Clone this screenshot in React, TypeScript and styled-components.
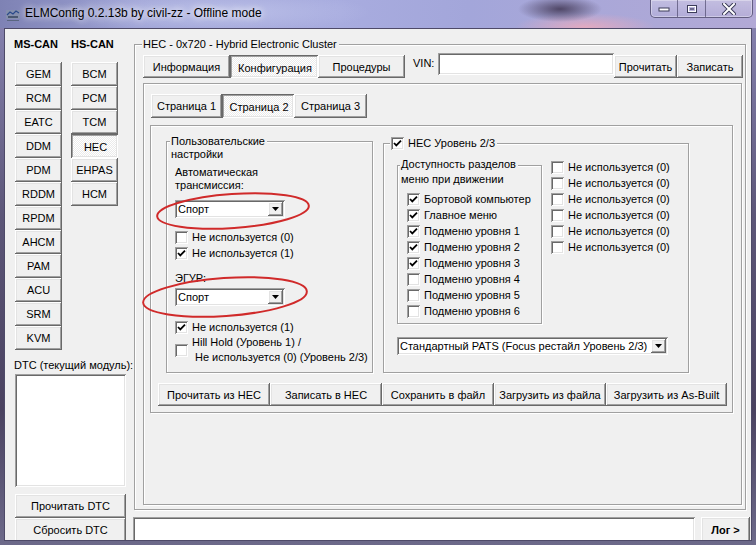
import React from "react";
import styled, { createGlobalStyle, css } from "styled-components";

const GlobalStyle = createGlobalStyle`
  *, *::before, *::after { box-sizing: border-box; }
  html, body { margin: 0; padding: 0; background: #3a3550; }
  body {
    font-family: "Liberation Sans", Arial, sans-serif;
    font-size: 11px;
    color: #000;
  }
`;

const raised = css`
  background: #f0f0f0;
  box-shadow: inset -1px -1px #696969, inset 1px 1px #ffffff,
    inset -2px -2px #a0a0a0, inset 2px 2px #e3e3e3;
`;

const sunken = css`
  box-shadow: inset 1px 1px #a0a0a0, inset -1px -1px #ffffff,
    inset 2px 2px #696969, inset -2px -2px #e3e3e3;
`;

const Window = styled.div`
  position: relative;
  width: 756px;
  height: 545px;
  overflow: hidden;
  display: flex;
  flex-direction: column;
  background:
    radial-gradient(ellipse 42px 13px at 560px 9px, rgba(70, 60, 90, 0.9), rgba(70, 60, 90, 0)) 0 0 / 100% 28px no-repeat,
    radial-gradient(ellipse 70px 14px at 585px 27px, rgba(232, 170, 190, 0.9), rgba(232, 170, 190, 0)) 0 0 / 100% 28px no-repeat,
    radial-gradient(ellipse 160px 22px at 210px 12px, rgba(200, 205, 240, 0.7), rgba(200, 205, 240, 0)) 0 0 / 100% 28px no-repeat,
    linear-gradient(to right, #7e82b4 0%, #9da1d4 18%, #a8acdf 45%, #a3a6da 62%, #b2a9d6 100%) 0 0 / 100% 28px no-repeat,
    linear-gradient(to bottom, #8a86b4 0%, #5c5678 40%, #4a4260 75%, #6d6a8a 100%);
`;

const TitleBar = styled.div`
  height: 28px;
  flex: none;
  display: flex;
  align-items: flex-start;
`;

const AppIcon = styled.svg`
  margin: 7px 0 0 5px;
  flex: none;
`;

const TitleText = styled.div`
  margin: 5px 0 0 4px;
  font-family: "Liberation Sans", Arial, sans-serif;
  font-size: 12px;
  line-height: 16px;
  color: #000;
  text-shadow: 0 0 6px rgba(255, 255, 255, 0.9), 0 0 10px rgba(255, 255, 255, 0.7);
`;

const CaptionButtons = styled.div`
  margin-left: auto;
  margin-right: 3px;
  height: 18px;
  display: flex;
  border: 1px solid rgba(50, 45, 80, 0.65);
  border-top: none;
  border-radius: 0 0 5px 5px;
  overflow: hidden;
  background: linear-gradient(to bottom, rgba(255, 255, 255, 0.25), rgba(255, 255, 255, 0.05));
  box-shadow: inset 0 0 0 1px rgba(255, 255, 255, 0.35);
`;

const CaptionButton = styled.div<{ $w: number }>`
  width: ${(p) => p.$w}px;
  height: 100%;
  display: flex;
  align-items: center;
  justify-content: center;
  & + & {
    border-left: 1px solid rgba(50, 45, 80, 0.55);
  }
`;

const Client = styled.div`
  margin: 0 4px;
  height: 513px;
  flex: none;
  display: flex;
  background: #f0f0f0;
  border: 1px solid #4e4a68;
  overflow: hidden;
`;

const LeftPanel = styled.div`
  width: 128px;
  flex: none;
  padding: 9px 0 0 9px;
`;

const CanHeader = styled.div`
  display: flex;
  height: 13px;
  line-height: 13px;
  font-weight: bold;
  font-size: 11px;
`;

const CanTitle = styled.span`
  width: 57px;
`;

const ModuleColumns = styled.div`
  display: flex;
  gap: 9px;
  margin: 11px 0 0 1px;
`;

const ModuleColumn = styled.div`
  display: flex;
  flex-direction: column;
`;

const Button = styled.button<{ $w?: number; $h?: number; $pressed?: boolean; $bold?: boolean }>`
  ${raised};
  border: none;
  margin: 0;
  padding: 0;
  flex: none;
  width: ${(p) => (p.$w ? `${p.$w}px` : "auto")};
  height: ${(p) => p.$h ?? 23}px;
  font-family: "Liberation Sans", Arial, sans-serif;
  font-size: 11px;
  font-weight: ${(p) => (p.$bold ? "bold" : "normal")};
  color: #000;
  white-space: nowrap;
  ${(p) =>
    p.$pressed &&
    css`
      background: repeating-conic-gradient(#ffffff 0 25%, #ebebeb 0 50%) 0 0 / 2px 2px;
      box-shadow: inset 1px 1px #696969, inset -1px -1px #ffffff,
        inset 2px 2px #a0a0a0, inset -2px -2px #e3e3e3;
      padding: 2px 0 0 2px;
    `}
`;

const DtcLabel = styled.div`
  margin-top: 9px;
  line-height: 13px;
  white-space: nowrap;
  width: 0;
  overflow: visible;
`;

const DtcList = styled.div`
  ${sunken};
  background: #fff;
  width: 111px;
  height: 113px;
  margin: 2px 0 0 1px;
`;

const DtcButtons = styled.div`
  margin: 7px 0 0 1px;
  display: flex;
  flex-direction: column;
`;

const Main = styled.div`
  flex: 1;
  display: flex;
  flex-direction: column;
`;

const GroupBox = styled.div<{ $w: number; $h: number }>`
  width: ${(p) => p.$w}px;
  height: ${(p) => p.$h}px;
  flex: none;
  border: 1px solid #a0a0a0;
  box-shadow: inset 1px 1px #ffffff, 1px 1px #ffffff;
`;

const HecGroup = styled(GroupBox)`
  margin: 15px 0 0 1px;
`;

const Caption = styled.div<{ $left: number; $lh?: number; $up?: number }>`
  width: fit-content;
  margin: -${(p) => p.$up ?? 7}px 0 0 ${(p) => p.$left}px;
  padding: 0 2px 0 1px;
  line-height: ${(p) => p.$lh ?? 13}px;
  background: #f0f0f0;
  display: flex;
  align-items: center;
  gap: 4px;
`;

const TopRow = styled.div`
  margin-top: 4px;
  padding-left: 8px;
  height: 23px;
  display: flex;
  align-items: center;
`;

const VinLabel = styled.span`
  margin-left: 8px;
  width: 25px;
  align-self: flex-start;
  line-height: 21px;
  margin-top: -2px;
`;

const VinInput = styled.div`
  ${sunken};
  background: #fff;
  width: 176px;
  height: 22px;
  margin-top: -2px;
  align-self: flex-start;
`;

const OuterPanel = styled.div`
  margin: 5px 0 0 8px;
  width: 599px;
  height: 422px;
  border: 1px solid #a0a0a0;
  box-shadow: inset 1px 1px #ffffff, 1px 1px #ffffff;
`;

const PageTabs = styled.div`
  display: flex;
  margin: 10px 0 0 7px;
`;

const InnerPanel = styled.div`
  margin: 7px 0 0 6px;
  width: 583px;
  height: 288px;
  border: 1px solid #a0a0a0;
  box-shadow: inset 1px 1px #ffffff, 1px 1px #ffffff;
`;

const SettingsRow = styled.div`
  display: flex;
  align-items: flex-start;
  margin-top: 15px;
  padding-left: 15px;
`;

const LeftGroup = styled(GroupBox)``;

const RightGroup = styled(GroupBox)`
  margin: 2px 0 0 10px;
`;

const GroupBody = styled.div`
  padding-left: 8px;
`;

const TextBlock = styled.div<{ $mt: number }>`
  margin-top: ${(p) => p.$mt}px;
  line-height: 13px;
`;

const ComboField = styled.div<{ $w: number; $mt?: number; $ml?: number }>`
  ${sunken};
  background: #fff;
  width: ${(p) => p.$w}px;
  height: 18px;
  margin: ${(p) => p.$mt ?? 0}px 0 0 ${(p) => p.$ml ?? 0}px;
  display: flex;
  align-items: center;
  padding: 0 2px 0 3px;
`;

const ComboText = styled.span`
  flex: 1;
  white-space: nowrap;
  overflow: hidden;
`;

const ComboArrow = styled.span`
  ${raised};
  width: 15px;
  height: 14px;
  display: flex;
  align-items: center;
  justify-content: center;
`;

const CheckList = styled.div<{ $mt: number; $pl?: number }>`
  margin-top: ${(p) => p.$mt}px;
  padding-left: ${(p) => p.$pl ?? 0}px;
  display: flex;
  flex-direction: column;
`;

const CheckRow = styled.div<{ $lh?: number }>`
  display: flex;
  align-items: center;
  min-height: 16px;
  line-height: ${(p) => p.$lh ?? 16}px;
  white-space: nowrap;
`;

const CheckLabel = styled.span`
  margin-left: 4px;
`;

const Indent = styled.span`
  display: block;
  padding-left: 3px;
`;

const Box = styled.span`
  ${sunken};
  background: #fff;
  width: 13px;
  height: 13px;
  flex: none;
  display: flex;
  align-items: center;
  justify-content: center;
`;

const RightBody = styled.div`
  display: flex;
  align-items: flex-start;
  padding-left: 13px;
`;

const MenuGroup = styled(GroupBox)`
  margin-top: 15px;
`;

const UnusedColumn = styled.div`
  margin: 9px 0 0 9px;
  display: flex;
  flex-direction: column;
`;

const ActionRow = styled.div`
  display: flex;
  margin: 10px 0 0 7px;
`;

const LogRow = styled.div`
  margin-top: 7px;
  display: flex;
`;

const LogBox = styled.div`
  ${sunken};
  background: #fff;
  width: 562px;
  height: 27px;
`;

const LogButton = styled(Button)`
  margin-left: 6px;
`;

const Annotations = styled.svg`
  position: absolute;
  left: 0;
  top: 0;
  pointer-events: none;
`;

const Check = ({ checked }: { checked?: boolean }) => (
  <Box>
    {checked && (
      <svg width="9" height="9" viewBox="0 0 9 9">
        <path d="M1 4 L3.3 6.4 L8 1.6" fill="none" stroke="#000" strokeWidth="1.8" />
      </svg>
    )}
  </Box>
);

const CheckItem = ({ label, checked }: { label: React.ReactNode; checked?: boolean }) => (
  <CheckRow>
    <Check checked={checked} />
    <CheckLabel>{label}</CheckLabel>
  </CheckRow>
);

const Combo = ({ value, w, mt, ml }: { value: string; w: number; mt?: number; ml?: number }) => (
  <ComboField $w={w} $mt={mt} $ml={ml}>
    <ComboText>{value}</ComboText>
    <ComboArrow>
      <svg width="7" height="4" viewBox="0 0 7 4">
        <path d="M0 0 H7 L3.5 4 Z" fill="#000" />
      </svg>
    </ComboArrow>
  </ComboField>
);

const msCan = ["GEM", "RCM", "EATC", "DDM", "PDM", "RDDM", "RPDM", "AHCM", "PAM", "ACU", "SRM", "KVM"];
const hsCan = ["BCM", "PCM", "TCM", "HEC", "EHPAS", "HCM"];

const menuItems: [string, boolean][] = [
  ["Бортовой компьютер", true],
  ["Главное меню", true],
  ["Подменю уровня 1", true],
  ["Подменю уровня 2", true],
  ["Подменю уровня 3", true],
  ["Подменю уровня 4", false],
  ["Подменю уровня 5", false],
  ["Подменю уровня 6", false],
];

const actions: [string, number][] = [
  ["Прочитать из HEC", 112],
  ["Записать в HEC", 112],
  ["Сохранить в файл", 112],
  ["Загрузить из файла", 112],
  ["Загрузить из As-Built", 121],
];

const App = () => {
  return (
    <Window>
      <GlobalStyle />
      <TitleBar>
        <AppIcon width="16" height="16" viewBox="0 0 16 16">
          <rect x="1" y="3" width="14" height="9" rx="1" fill="#8894a8" opacity="0.7" />
          <path d="M2 8 L5 5 L8 7 L11 4 L14 6" fill="none" stroke="#2a4a8a" strokeWidth="1.2" />
          <rect x="3" y="9" width="10" height="2" fill="#4a5870" />
          <rect x="2" y="13" width="12" height="1" fill="#5a6680" />
        </AppIcon>
        <TitleText>ELMConfig 0.2.13b by civil-zz - Offline mode</TitleText>
        <CaptionButtons>
          <CaptionButton $w={26}>
            <svg width="12" height="6" viewBox="0 0 12 6">
              <rect x="1" y="2" width="10" height="3" fill="#fff" stroke="#3c3c5a" strokeWidth="1" />
            </svg>
          </CaptionButton>
          <CaptionButton $w={28}>
            <svg width="12" height="10" viewBox="0 0 12 10">
              <rect x="1.5" y="1.5" width="9" height="7" fill="none" stroke="#3c3c5a" strokeWidth="1" />
              <rect x="2.5" y="2.5" width="7" height="5" fill="none" stroke="#fff" strokeWidth="1" />
              <rect x="4" y="4" width="4" height="2" fill="#3c3c5a" opacity="0.6" />
            </svg>
          </CaptionButton>
          <CaptionButton $w={47}>
            <svg width="14" height="12" viewBox="0 0 14 12">
              <path d="M2 1 L12 11 M12 1 L2 11" stroke="#3c3c5a" strokeWidth="4" strokeLinecap="square" />
              <path d="M2 1 L12 11 M12 1 L2 11" stroke="#fff" strokeWidth="2" strokeLinecap="square" />
            </svg>
          </CaptionButton>
        </CaptionButtons>
      </TitleBar>

      <Client>
        <LeftPanel>
          <CanHeader>
            <CanTitle>MS-CAN</CanTitle>
            <span>HS-CAN</span>
          </CanHeader>
          <ModuleColumns>
            <ModuleColumn>
              {msCan.map((m) => (
                <Button key={m} $w={47} $h={24}>
                  {m}
                </Button>
              ))}
            </ModuleColumn>
            <ModuleColumn>
              {hsCan.map((m) => (
                <Button key={m} $w={47} $h={24} $pressed={m === "HEC"}>
                  {m}
                </Button>
              ))}
            </ModuleColumn>
          </ModuleColumns>
          <DtcLabel>DTC (текущий модуль):</DtcLabel>
          <DtcList />
          <DtcButtons>
            <Button $w={111} $h={24}>Прочитать DTC</Button>
            <Button $w={111} $h={24}>Сбросить DTC</Button>
          </DtcButtons>
        </LeftPanel>

        <Main>
          <HecGroup $w={612} $h={466}>
            <Caption $left={7}>HEC - 0x720 - Hybrid Electronic Cluster</Caption>
            <TopRow>
              <Button $w={87}>Информация</Button>
              <Button $w={88} $pressed>Конфигурация</Button>
              <Button $w={87}>Процедуры</Button>
              <VinLabel>VIN:</VinLabel>
              <VinInput />
              <Button $w={63}>Прочитать</Button>
              <Button $w={66}>Записать</Button>
            </TopRow>
            <OuterPanel>
              <PageTabs>
                <Button $w={71} $h={24}>Страница 1</Button>
                <Button $w={72} $h={24} $pressed>Страница 2</Button>
                <Button $w={73} $h={24}>Страница 3</Button>
              </PageTabs>
              <InnerPanel>
                <SettingsRow>
                  <LeftGroup $w={207} $h={232}>
                    <Caption $left={3}>
                      Пользовательские
                      <br />
                      настройки
                    </Caption>
                    <GroupBody>
                      <TextBlock $mt={5}>
                        Автоматическая
                        <br />
                        трансмиссия:
                      </TextBlock>
                      <Combo value="Спорт" w={110} mt={8} />
                      <CheckList $mt={11}>
                        <CheckItem label="Не используется (0)" />
                        <CheckItem label="Не используется (1)" checked />
                      </CheckList>
                      <TextBlock $mt={11}>ЭГУР:</TextBlock>
                      <Combo value="Спорт" w={110} mt={3} />
                      <CheckList $mt={13}>
                        <CheckItem label="Не используется (1)" checked />
                        <CheckRow $lh={15}>
                          <Check />
                          <CheckLabel>
                            Hill Hold (Уровень 1) /
                            <Indent>Не используется (0) (Уровень 2/3)</Indent>
                          </CheckLabel>
                        </CheckRow>
                      </CheckList>
                    </GroupBody>
                  </LeftGroup>

                  <RightGroup $w={306} $h={230}>
                    <Caption $left={6}>
                      <Check checked />
                      HEC Уровень 2/3
                    </Caption>
                    <RightBody>
                      <MenuGroup $w={145} $h={159}>
                        <Caption $left={2} $lh={15} $up={9}>
                          Доступность разделов
                          <br />
                          меню при движении
                        </Caption>
                        <CheckList $mt={4} $pl={9}>
                          {menuItems.map(([label, on]) => (
                            <CheckItem key={label} label={label} checked={on} />
                          ))}
                        </CheckList>
                      </MenuGroup>
                      <UnusedColumn>
                        {[0, 1, 2, 3, 4, 5].map((i) => (
                          <CheckItem key={i} label="Не используется (0)" />
                        ))}
                      </UnusedColumn>
                    </RightBody>
                    <Combo value="Стандартный PATS (Focus рестайл Уровень 2/3)" w={271} mt={13} ml={13} />
                  </RightGroup>
                </SettingsRow>
                <ActionRow>
                  {actions.map(([label, w]) => (
                    <Button key={label} $w={w}>
                      {label}
                    </Button>
                  ))}
                </ActionRow>
              </InnerPanel>
            </OuterPanel>
          </HecGroup>
          <LogRow>
            <LogBox />
            <LogButton $w={49} $h={25} $bold>
              Лог &gt;
            </LogButton>
          </LogRow>
        </Main>
      </Client>

      <Annotations width="756" height="545" viewBox="0 0 756 545">
        <ellipse cx="233" cy="211" rx="76" ry="17" fill="none" stroke="#d02a2a" strokeWidth="2" transform="rotate(-4 233 211)" />
        <ellipse cx="225" cy="297" rx="82" ry="19" fill="none" stroke="#d02a2a" strokeWidth="2" transform="rotate(-4 225 297)" />
      </Annotations>
    </Window>
  );
};

export default App;
